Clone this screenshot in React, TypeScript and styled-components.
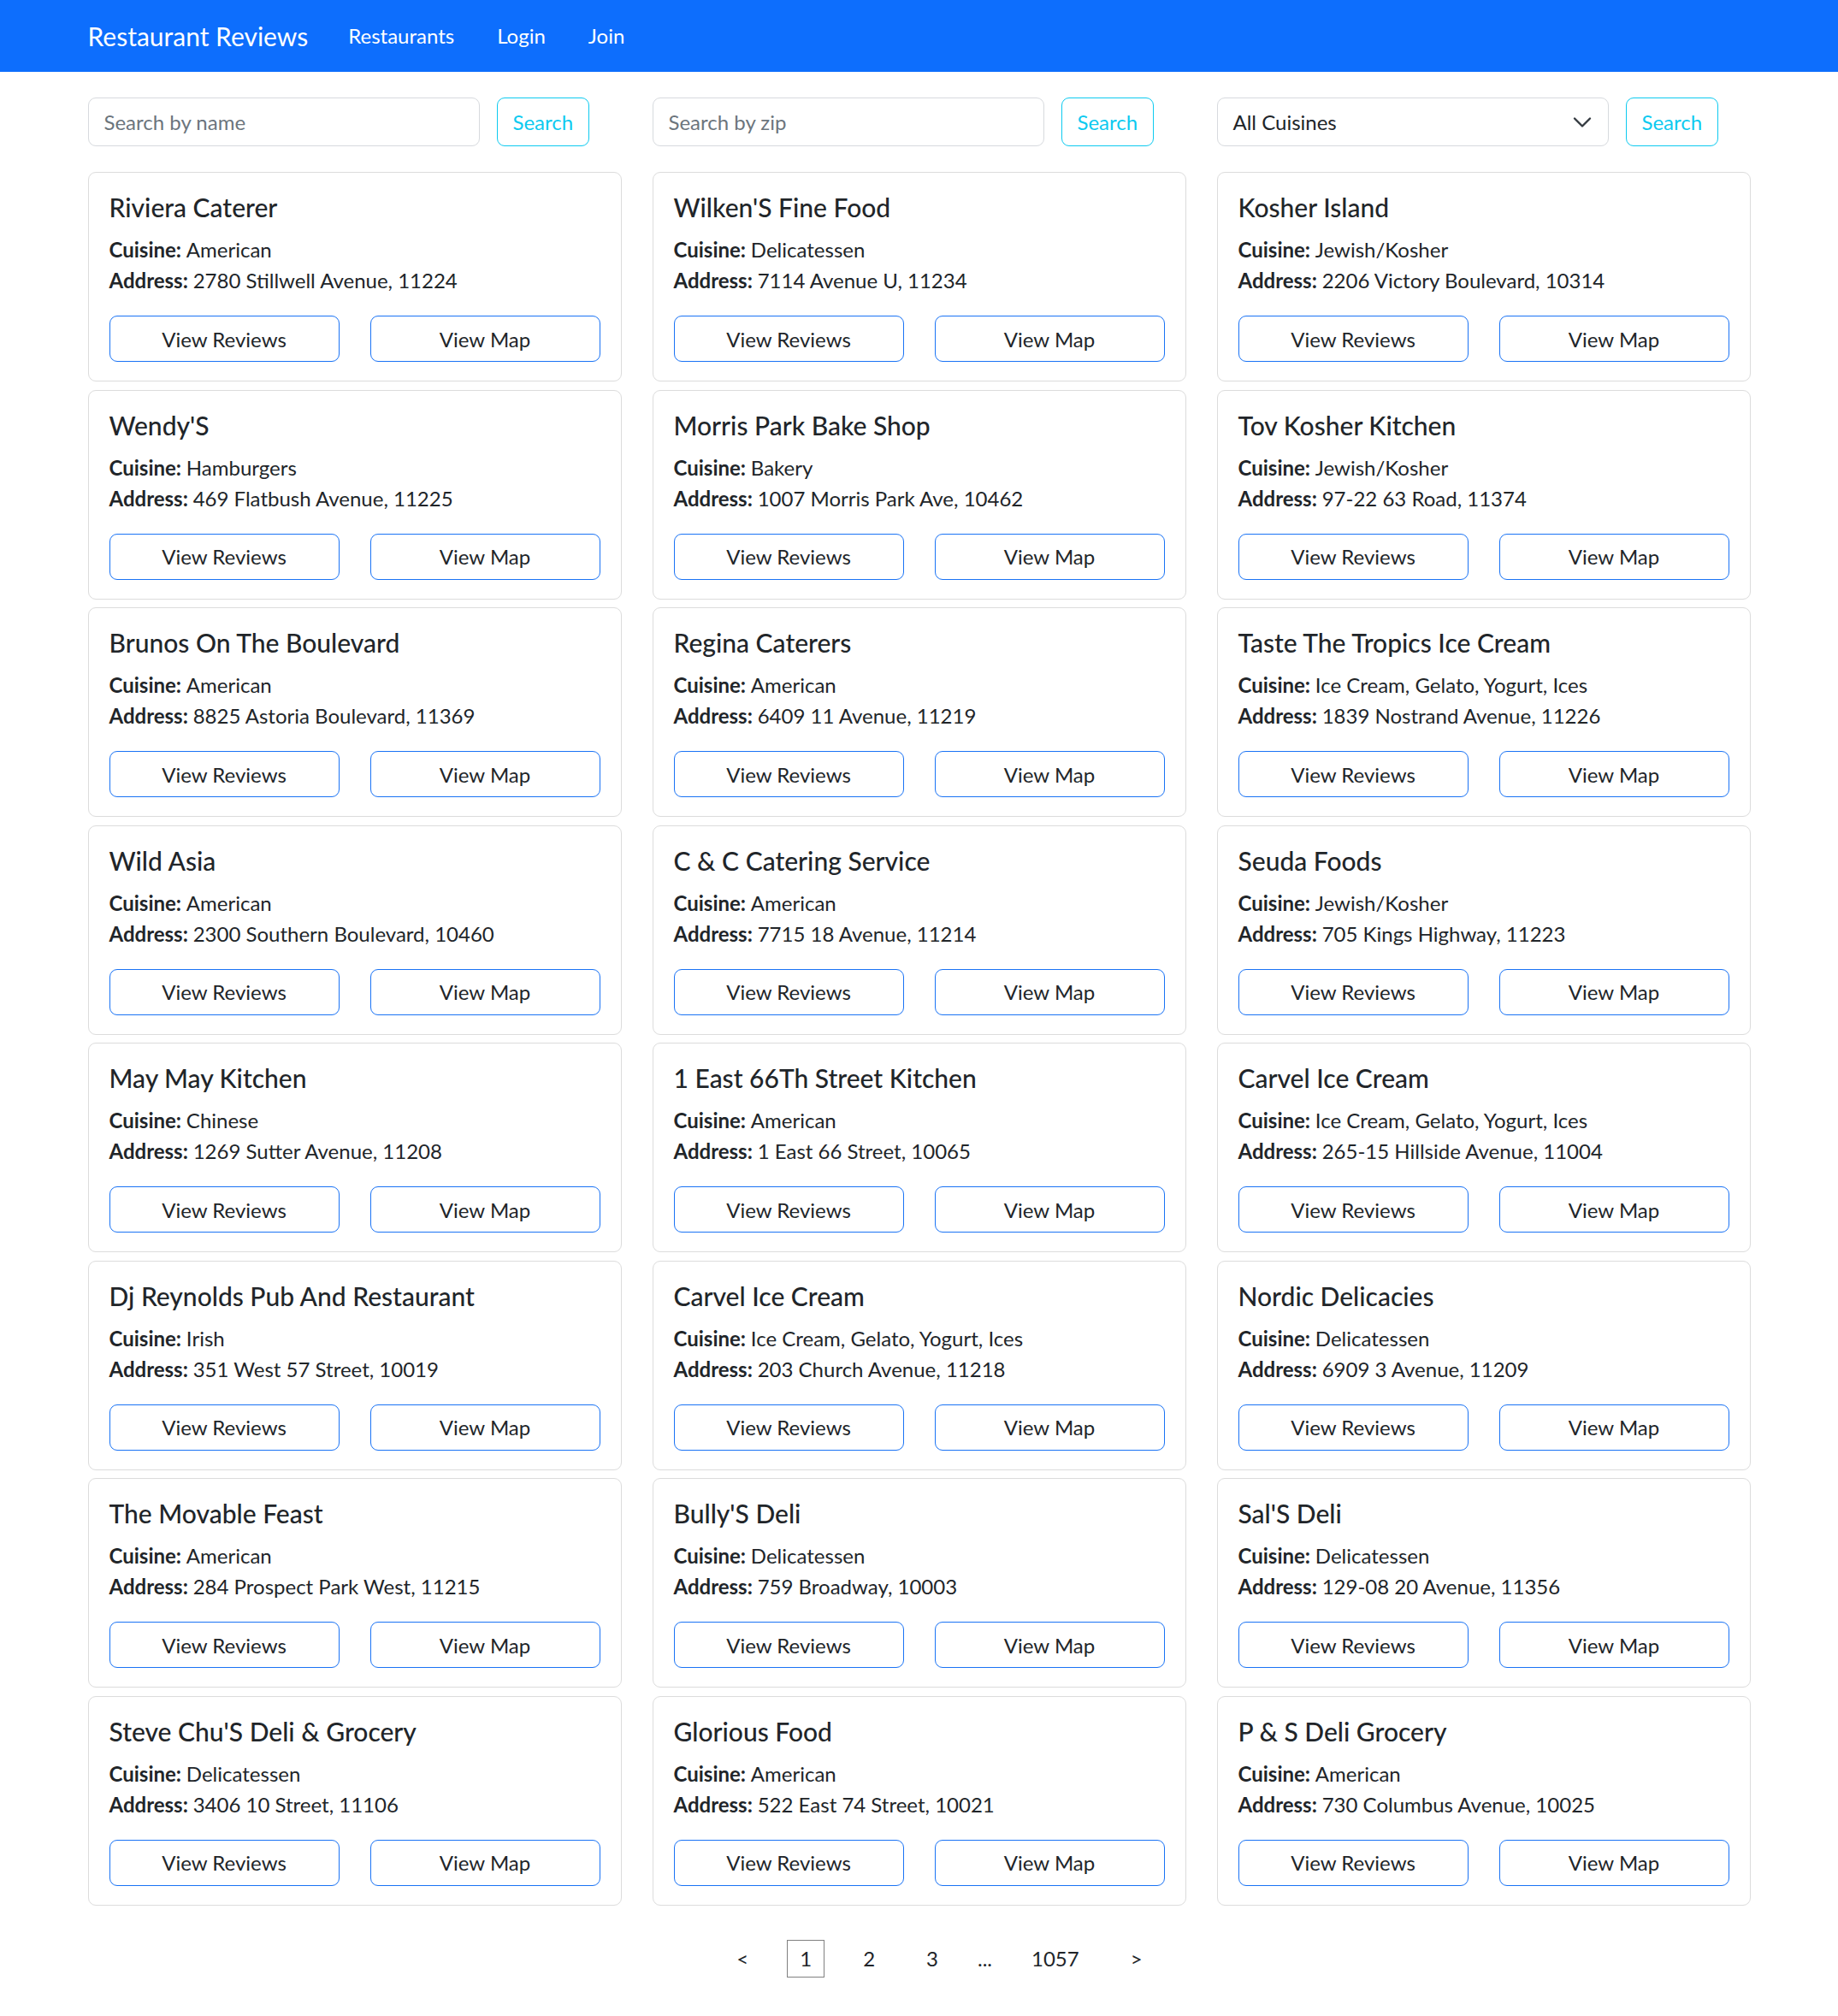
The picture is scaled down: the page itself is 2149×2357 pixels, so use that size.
import styled, { createGlobalStyle } from "styled-components";

type Restaurant = {
  name: string;
  cuisine: string;
  address: string;
};

const restaurants: Restaurant[] = [
  { name: "Riviera Caterer", cuisine: "American", address: "2780 Stillwell Avenue, 11224" },
  { name: "Wilken'S Fine Food", cuisine: "Delicatessen", address: "7114 Avenue U, 11234" },
  { name: "Kosher Island", cuisine: "Jewish/Kosher", address: "2206 Victory Boulevard, 10314" },
  { name: "Wendy'S", cuisine: "Hamburgers", address: "469 Flatbush Avenue, 11225" },
  { name: "Morris Park Bake Shop", cuisine: "Bakery", address: "1007 Morris Park Ave, 10462" },
  { name: "Tov Kosher Kitchen", cuisine: "Jewish/Kosher", address: "97-22 63 Road, 11374" },
  { name: "Brunos On The Boulevard", cuisine: "American", address: "8825 Astoria Boulevard, 11369" },
  { name: "Regina Caterers", cuisine: "American", address: "6409 11 Avenue, 11219" },
  { name: "Taste The Tropics Ice Cream", cuisine: "Ice Cream, Gelato, Yogurt, Ices", address: "1839 Nostrand Avenue, 11226" },
  { name: "Wild Asia", cuisine: "American", address: "2300 Southern Boulevard, 10460" },
  { name: "C & C Catering Service", cuisine: "American", address: "7715 18 Avenue, 11214" },
  { name: "Seuda Foods", cuisine: "Jewish/Kosher", address: "705 Kings Highway, 11223" },
  { name: "May May Kitchen", cuisine: "Chinese", address: "1269 Sutter Avenue, 11208" },
  { name: "1 East 66Th Street Kitchen", cuisine: "American", address: "1 East 66 Street, 10065" },
  { name: "Carvel Ice Cream", cuisine: "Ice Cream, Gelato, Yogurt, Ices", address: "265-15 Hillside Avenue, 11004" },
  { name: "Dj Reynolds Pub And Restaurant", cuisine: "Irish", address: "351 West 57 Street, 10019" },
  { name: "Carvel Ice Cream", cuisine: "Ice Cream, Gelato, Yogurt, Ices", address: "203 Church Avenue, 11218" },
  { name: "Nordic Delicacies", cuisine: "Delicatessen", address: "6909 3 Avenue, 11209" },
  { name: "The Movable Feast", cuisine: "American", address: "284 Prospect Park West, 11215" },
  { name: "Bully'S Deli", cuisine: "Delicatessen", address: "759 Broadway, 10003" },
  { name: "Sal'S Deli", cuisine: "Delicatessen", address: "129-08 20 Avenue, 11356" },
  { name: "Steve Chu'S Deli & Grocery", cuisine: "Delicatessen", address: "3406 10 Street, 11106" },
  { name: "Glorious Food", cuisine: "American", address: "522 East 74 Street, 10021" },
  { name: "P & S Deli Grocery", cuisine: "American", address: "730 Columbus Avenue, 10025" },
];

const GlobalStyle = createGlobalStyle`
  body {
    margin: 0;
    font-family: Lato, "Noto Sans", sans-serif;
    font-size: 24px;
    line-height: 1.5;
    color: #212529;
    background: #fff;
  }
  * {
    box-sizing: border-box;
  }
`;

const Navbar = styled.nav`
  background: #0d6efd;
  height: 84px;
`;

const NavInner = styled.div`
  width: 1944px;
  margin: 0 auto;
  height: 100%;
  display: flex;
  align-items: center;
`;

const Brand = styled.a`
  color: #fff;
  font-size: 30px;
  margin-right: 22px;
  text-decoration: none;
`;

const NavLink = styled.a`
  color: #fff;
  font-size: 24px;
  padding: 0 25px;
  text-decoration: none;
`;

const Container = styled.main`
  width: 1944px;
  margin: 0 auto;
  padding-top: 30px;
`;

const SearchRow = styled.div`
  display: grid;
  grid-template-columns: repeat(3, 1fr);
  column-gap: 36px;
  margin-bottom: 30px;
`;

const SearchGroup = styled.div`
  display: flex;
  align-items: center;
  gap: 20px;
`;

const fieldBase = `
  width: 458px;
  height: 57px;
  border: 1px solid #d7dade;
  border-radius: 9px;
  padding: 0 18px;
  font-family: inherit;
  font-size: 24px;
  color: #212529;
  background: #fff;
`;

const TextInput = styled.input`
  ${fieldBase}
  &::placeholder {
    color: #6c757d;
  }
`;

const SelectBox = styled.div`
  ${fieldBase}
  display: flex;
  align-items: center;
  justify-content: space-between;
`;

const SearchButton = styled.button`
  height: 57px;
  padding: 0 18px;
  border: 1px solid #0dcaf0;
  border-radius: 9px;
  background: #fff;
  color: #0dcaf0;
  font-family: inherit;
  font-size: 24px;
`;

const CardGrid = styled.div`
  display: grid;
  grid-template-columns: repeat(3, 1fr);
  column-gap: 36px;
  row-gap: 9.5px;
`;

const Card = styled.div`
  border: 1px solid #dcdcdc;
  border-radius: 9px;
  padding: 22px 24px 22px;
`;

const CardTitle = styled.h5`
  margin: 0 0 14px;
  font-size: 30px;
  font-weight: 500;
  line-height: 36px;
`;

const CardText = styled.p`
  margin: 0 0 23px;
  line-height: 36px;
`;

const Actions = styled.div`
  display: grid;
  grid-template-columns: 1fr 1fr;
  column-gap: 36px;
`;

const ActionButton = styled.button`
  height: 54px;
  border: 1px solid #1a73f5;
  border-radius: 9px;
  background: #fff;
  color: #212529;
  font-family: inherit;
  font-size: 24px;
`;

const Pagination = styled.ul`
  list-style: none;
  display: flex;
  justify-content: center;
  align-items: center;
  margin: 40px 0 48px;
  padding: 0 0 0 48px;
`;

const PageItem = styled.li<{ $active?: boolean; $break?: boolean }>`
  margin: 0 15px;
  padding: ${(p) => (p.$break ? "0" : "3px 14px")};
  line-height: 36px;
  border: 1px solid ${(p) => (p.$active ? "#808080" : "transparent")};
  color: #212529;
`;

const Chevron = () => (
  <svg width="24" height="18" viewBox="0 0 16 12">
    <path d="m2 3 6 6 6-6" fill="none" stroke="#343a40" strokeWidth="1.6" strokeLinecap="round" strokeLinejoin="round" />
  </svg>
);

const RestaurantCard = ({ r }: { r: Restaurant }) => (
  <Card>
    <CardTitle>{r.name}</CardTitle>
    <CardText>
      <strong>Cuisine: </strong>
      {r.cuisine}
      <br />
      <strong>Address: </strong>
      {r.address}
    </CardText>
    <Actions>
      <ActionButton>View Reviews</ActionButton>
      <ActionButton>View Map</ActionButton>
    </Actions>
  </Card>
);

const App = () => {
  return (
    <>
      <GlobalStyle />
      <Navbar>
        <NavInner>
          <Brand href="#">Restaurant Reviews</Brand>
          <NavLink href="#">Restaurants</NavLink>
          <NavLink href="#">Login</NavLink>
          <NavLink href="#">Join</NavLink>
        </NavInner>
      </Navbar>
      <Container>
        <SearchRow>
          <SearchGroup>
            <TextInput placeholder="Search by name" />
            <SearchButton>Search</SearchButton>
          </SearchGroup>
          <SearchGroup>
            <TextInput placeholder="Search by zip" />
            <SearchButton>Search</SearchButton>
          </SearchGroup>
          <SearchGroup>
            <SelectBox>
              <span>All Cuisines</span>
              <Chevron />
            </SelectBox>
            <SearchButton>Search</SearchButton>
          </SearchGroup>
        </SearchRow>
        <CardGrid>
          {restaurants.map((r, i) => (
            <RestaurantCard key={i} r={r} />
          ))}
        </CardGrid>
        <Pagination>
          <PageItem>&lt;</PageItem>
          <PageItem $active>1</PageItem>
          <PageItem>2</PageItem>
          <PageItem>3</PageItem>
          <PageItem $break>...</PageItem>
          <PageItem>1057</PageItem>
          <PageItem>&gt;</PageItem>
        </Pagination>
      </Container>
    </>
  );
};

export default App;
